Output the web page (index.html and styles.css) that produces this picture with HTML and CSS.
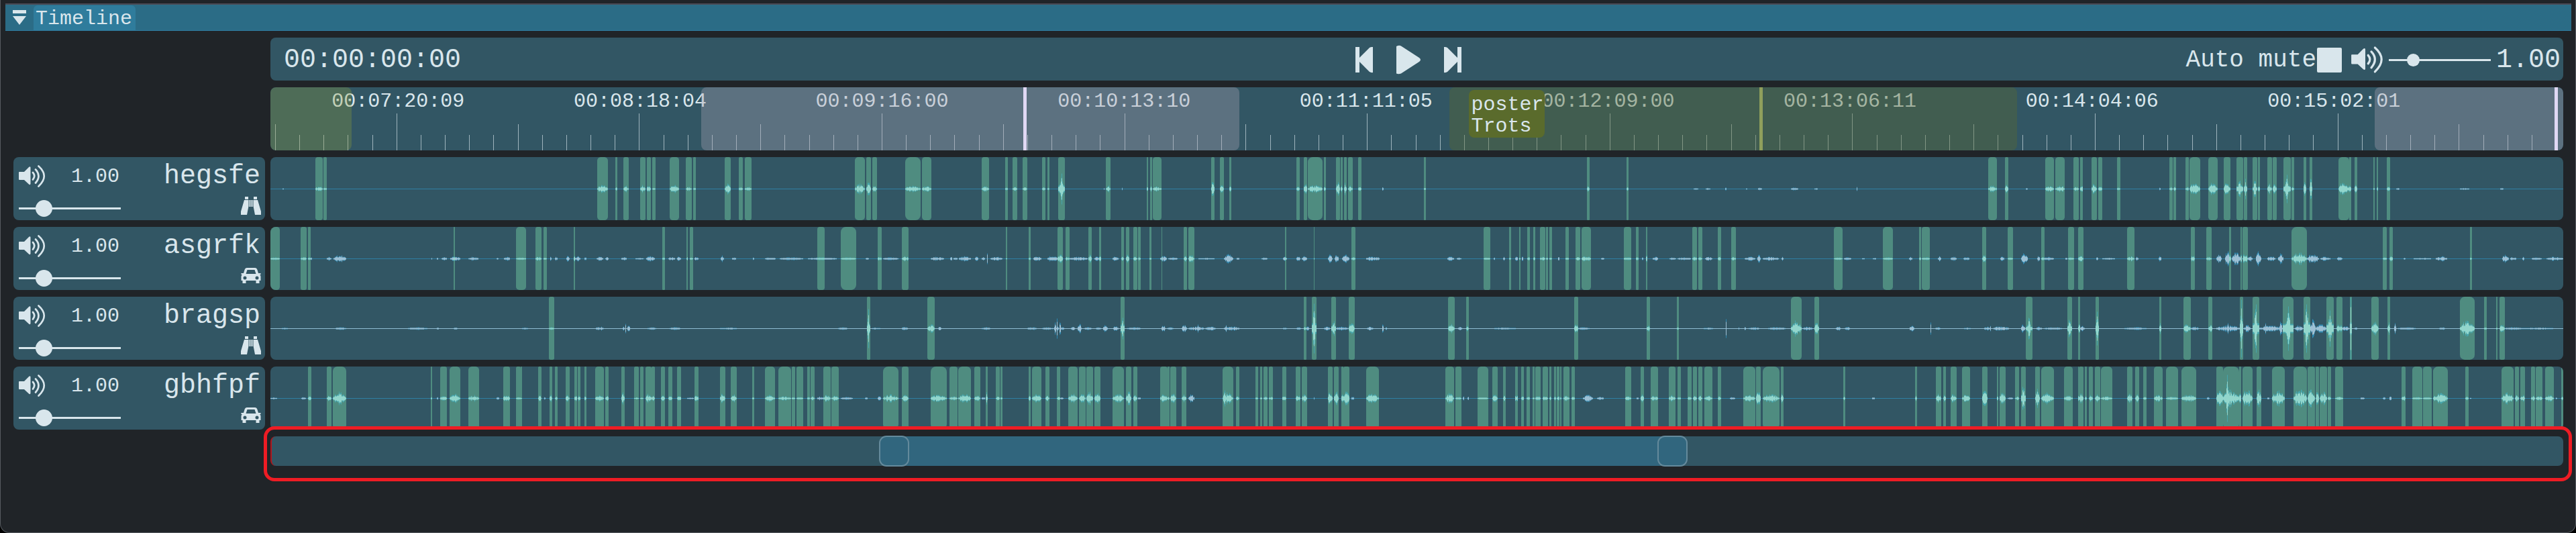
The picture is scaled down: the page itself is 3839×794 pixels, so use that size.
FILE: index.html
```
<!DOCTYPE html>
<html lang="en">
<head>
<meta charset="utf-8">
<title>Timeline</title>
<link rel="stylesheet" href="styles.css">
</head>
<body>
<svg class="defs" aria-hidden="true">
  <symbol id="speaker" viewBox="0 0 40 36">
    <path d="M0 11.500Q0 11 1 11H8L15 4Q17 2.500 17.500 4.500V29Q17 31 15 29.500L8 23H1Q0 23 0 22Z" fill="currentColor"/>
    <path d="M21 12Q25.500 17 21 22.500M25 7.500Q34 17 25 27.500M29.500 2.500Q46 17 29.500 32.500" fill="none" stroke="currentColor" stroke-width="2.700" stroke-linecap="round"/>
  </symbol>
  <symbol id="binoculars" viewBox="0 0 30 28">
    <path d="M6 0H11V4H6ZM19 0H24V4H19ZM5 5H11.500V14L9 27H0V22ZM18.500 5H25L30 22V27H21L18.500 14ZM12.500 5H14.500V15H12.500ZM15.500 5H17.500V15H15.500Z" fill="currentColor"/>
  </symbol>
  <symbol id="car" viewBox="0 0 30 24">
    <path fill-rule="evenodd" d="M9 0H21Q23.500 0 24.500 3L26 8H29.500V10H28Q29.500 11 29.500 13V19H27.500V23H22.500V19H7.500V23H2.500V19H.500V13Q.500 11 2 10H.500V8H4L5.500 3Q6.500 0 9 0ZM9.500 3L7.500 9H22.500L20.500 3ZM6 12.500A2.500 2.500 0 1 0 6 17.500A2.500 2.500 0 1 0 6 12.500ZM24 12.500A2.500 2.500 0 1 0 24 17.500A2.500 2.500 0 1 0 24 12.500Z" fill="currentColor"/>
  </symbol>
</svg>
<main class="window">
  <header class="titlebar">
    <button class="collapse" type="button" aria-label="Collapse panel">
      <svg viewBox="0 0 20 22" width="20" height="22"><path d="M0 0H20V5H0ZM0 9H20L10 22Z" fill="currentColor"/></svg>
    </button>
    <h1 class="tab">Timeline</h1>
  </header>
  <div class="body">
    <section class="transport">
      <time class="timecode">00:00:00:00</time>
      <div class="playback">
        <button type="button" aria-label="Previous"><svg viewBox="0 0 28 40" width="28" height="40"><path d="M1 1H7V17L22 2Q24 .500 27 1V39Q24 39.500 22 38L7 23V39H1Z" fill="currentColor"/></svg></button>
        <button type="button" aria-label="Play"><svg viewBox="0 0 38 44" width="38" height="44"><path d="M1 2Q5 0 8 1.500L35 19Q39 22 35 25L8 42.500Q4 44 1 42.500Z" fill="currentColor"/></svg></button>
        <button type="button" aria-label="Next"><svg viewBox="0 0 28 40" width="28" height="40"><path d="M27 1H21V17L6 2Q4 .500 1 1V39Q4 39.500 6 38L21 23V39H27Z" fill="currentColor"/></svg></button>
      </div>
      <div class="master">
        <label class="mute-label" for="mute">Auto mute</label>
        <input class="mute" id="mute" type="checkbox">
        <svg class="speaker-large"><use href="#speaker"/></svg>
        <input class="slider slider-small" type="range" min="0" max="5" step="0.01" value="1" aria-label="Master volume">
        <output class="timecode">1.00</output>
      </div>
    </section>

    <section class="ruler">
      <svg class="ticks" id="ticks" viewBox="0 0 3417 94" preserveAspectRatio="none"></svg>
      <div class="ruler-labels">
        <span>00:07:20:09</span><span>00:08:18:04</span><span>00:09:16:00</span><span>00:10:13:10</span><span>00:11:11:05</span><span>00:12:09:00</span><span>00:13:06:11</span><span>00:14:04:06</span><span>00:15:02:01</span>
      </div>
      <div class="region region-green"></div>
      <div class="region region-violet"></div>
      <div class="region region-poster"></div>
      <div class="region region-last"></div>
      <div class="marker marker-first"></div>
      <div class="marker marker-olive"></div>
      <div class="marker marker-last"></div>
      <div class="tag">poster<br>Trots</div>
    </section>

    <section class="track">
      <div class="controls"><svg class="speaker"><use href="#speaker"/></svg><output>1.00</output></div>
      <label class="name" for="volume-1">hegsfe</label>
      <input class="slider" id="volume-1" type="range" min="0" max="5" step="0.01" value="1">
      <svg class="badge binoculars"><use href="#binoculars"/></svg>
    </section>
    <svg class="lane" viewBox="0 0 3417 94" preserveAspectRatio="none"></svg>

    <section class="track">
      <div class="controls"><svg class="speaker"><use href="#speaker"/></svg><output>1.00</output></div>
      <label class="name" for="volume-2">asgrfk</label>
      <input class="slider" id="volume-2" type="range" min="0" max="5" step="0.01" value="1">
      <svg class="badge car"><use href="#car"/></svg>
    </section>
    <svg class="lane" viewBox="0 0 3417 94" preserveAspectRatio="none"></svg>

    <section class="track">
      <div class="controls"><svg class="speaker"><use href="#speaker"/></svg><output>1.00</output></div>
      <label class="name" for="volume-3">bragsp</label>
      <input class="slider" id="volume-3" type="range" min="0" max="5" step="0.01" value="1">
      <svg class="badge binoculars"><use href="#binoculars"/></svg>
    </section>
    <svg class="lane" viewBox="0 0 3417 94" preserveAspectRatio="none"></svg>

    <section class="track">
      <div class="controls"><svg class="speaker"><use href="#speaker"/></svg><output>1.00</output></div>
      <label class="name" for="volume-4">gbhfpf</label>
      <input class="slider" id="volume-4" type="range" min="0" max="5" step="0.01" value="1">
      <svg class="badge car"><use href="#car"/></svg>
    </section>
    <svg class="lane" viewBox="0 0 3417 94" preserveAspectRatio="none"></svg>

    <div class="scroller">
      <div class="scroll-range">
        <button class="handle handle-start" type="button" aria-label="Range start"></button>
        <button class="handle handle-end" type="button" aria-label="Range end"></button>
      </div>
      <div class="highlight"></div>
    </div>
  </div>
</main>
<script src="timeline.js"></script>
</body>
</html>
```

FILE: styles.css
```
:root {
  --bg: #202428;
  --panel: #325664;
  --ink: #d9e6ec;
}

* { box-sizing: border-box; }

html { background: #000; }

body {
  margin: 0;
  color: var(--ink);
  font: 30px/34px "Liberation Mono", monospace;
}

.defs { position: absolute; width: 0; height: 0; }

button {
  display: block;
  margin: 0;
  padding: 0;
  border: 0;
  background: none;
  color: inherit;
}

svg { display: block; }

.window {
  min-height: 100vh;
  padding-top: 5px;
  background: var(--bg);
  border: solid #565b60;
  border-width: 0 1px 1px;
  border-radius: 0 0 14px 14px;
}

.titlebar {
  display: flex;
  align-items: center;
  height: 41px;
  margin: 0 6px 0 7px;
  padding-left: 11px;
  gap: 11px;
  background: #2b6c86;
  border-top: 2px solid #4b4a55;
  border-bottom: 1px solid #2f7ca0;
}

.tab {
  align-self: stretch;
  margin: 1px 0 0;
  padding: 3px 5px 0 3px;
  border-radius: 6px 6px 0 0;
  background: #2f7c9c;
  font: inherit;
}

.body {
  display: grid;
  grid-template-columns: 375px 1fr;
  gap: 10px 8px;
  padding: 10px 18px 0 19px;
}

.transport {
  grid-column: 2;
  display: grid;
  grid-template-columns: 1fr auto 1fr;
  align-items: center;
  height: 64px;
  padding: 2px 4px 0 20px;
  border-radius: 8px;
  background: var(--panel);
}

.timecode { padding-top: 2px; font-size: 40px; line-height: 44px; }

.playback {
  display: flex;
  align-items: center;
  gap: 33px;
  padding-right: 42px;
}

.master {
  display: flex;
  align-items: center;
  justify-content: flex-end;
  gap: 8px;
}

.mute-label { margin-right: -7px; padding-top: 2px; font-size: 36px; }

.mute {
  appearance: none;
  width: 37px;
  height: 37px;
  margin: 0 6px 0 0;
  border-radius: 2px;
  background: var(--ink);
}

.slider {
  --thumb: 25px;
  appearance: none;
  width: 152px;
  height: 25px;
  margin: 0;
  background: none;
}

.slider-small { --thumb: 19px; }

.slider::-webkit-slider-runnable-track { height: 3px; background: var(--ink); }

.slider::-webkit-slider-thumb {
  appearance: none;
  width: var(--thumb);
  height: var(--thumb);
  margin-top: calc((3px - var(--thumb)) / 2);
  border-radius: 50%;
  background: var(--ink);
}

.speaker { width: 40px; height: 36px; }
.speaker-large { width: 48px; height: 43px; }

.ruler {
  grid-column: 2;
  position: relative;
  height: 94px;
  border-radius: 8px;
  background: var(--panel);
  overflow: hidden;
}

.ticks { position: absolute; inset: 0; width: 100%; height: 100%; }

.ruler-labels {
  position: relative;
  display: flex;
  padding: 4px 0 0 10px;
}

.ruler-labels span { flex: 0 0 10.585%; text-align: center; }

.region { position: absolute; top: 0; bottom: 0; border-radius: 8px; }
.region-green { left: 0; width: 3.54%; background: rgba(147, 159, 60, 0.3); }
.region-violet { left: 18.79%; width: 23.46%; background: rgba(173, 162, 180, 0.35); }
.region-poster { left: 51.43%; width: 24.76%; background: rgba(88, 104, 50, 0.4); }
.region-last { left: 91.79%; right: 0; background: rgba(173, 162, 180, 0.35); }

.marker { position: absolute; top: 0; bottom: 0; width: 5px; background: #e0d8f4; }
.marker-first { left: 32.84%; }
.marker-olive { left: 64.94%; background: #8f9f5c; }
.marker-last { right: 8px; }

.tag {
  position: absolute;
  top: 4px;
  left: 52.28%;
  padding: 6px 2px 1px 3px;
  border-radius: 8px;
  background: #5a6b2c;
  line-height: 32px;
}

.track {
  display: grid;
  grid-template: 58px 36px / 152px 1fr;
  align-items: center;
  padding: 0 5px 0 8px;
  border-radius: 8px;
  background: var(--panel);
}

.controls { display: flex; align-items: center; justify-content: space-between; padding-right: 2px; }

.name { padding-right: 2px; font-size: 40px; line-height: 44px; text-align: right; }

.badge { justify-self: end; align-self: start; width: 30px; margin: 1px 1px 0 0; }
.binoculars { height: 28px; }
.car { height: 24px; margin-top: 3px; }

.lane {
  width: 100%;
  height: 94px;
  border-radius: 8px;
  background: var(--panel);
}

.tick { fill: var(--ink); opacity: 0.65; }
.clip { fill: #4f8c80; }
.axis { fill: #2f7fa3; }
.axis-noisy { fill: #8fbdd2; }
.wave-outer { fill: #2f88b0; }
.wave-inner { fill: #9dc0d4; }
.clip-wave-outer { fill: #46a5ab; }
.clip-wave-inner { fill: #92d6cc; }

.scroller {
  grid-column: 2;
  position: relative;
  height: 44px;
  border-radius: 8px;
  border-left: 2px solid #b3141b;
  background: var(--panel);
}

.scroll-range {
  position: relative;
  width: 33.92%;
  height: 44px;
  margin-left: 27.15%;
  background: #31667e;
}

.handle {
  position: absolute;
  top: -1px;
  width: 45px;
  height: 46px;
  border: 2px solid #648a9c;
  border-radius: 11px;
  background: #31667e;
}

.handle-start { left: -22px; }
.handle-end { right: -24px; }

.highlight {
  position: absolute;
  inset: -15px -13px -23px -12px;
  border: 5px solid #ee1c24;
  border-radius: 16px;
  pointer-events: none;
}
```

FILE: timeline.js
```
const SVG = "http://www.w3.org/2000/svg";
const LANE_HEIGHT = 94;
const MIDDLE = LANE_HEIGHT / 2;

// Blocks of a lane: offset from the lane's start and units per lane pixel.
const BLOCKS = [[-3, 2.45], [297, 2.45], [897, 2.45], [1497, 2.45], [2097, 2.45], [2697, 2.122]];

// "start-end:peak" is a clip with its audio peak; a leading "~" is audio outside a clip.
const LANES = [
  [
    "171-198:4 200-212:2 ~52-56:1",
    "466-504:6 531-539:4 562-580:5 622-641:6 647-662:7 666-678:2 730-764:6 789-810:3 815-826:2 931-954:8 982-997:4 1004-1030:3 1406-1443:8 1448-1464:11",
    "0-16:5 120-176:5 181-215:5 400-427:5 486-494:3 513-528:3 548-566:3 621-632:5 640-646:2 679-702:24 853-870:5 1002-1006:6 1014-1022:5 1024-1056:4 1238-1250:12 1269-1285:6 1303-1311:6 ~845-848:2 ~911-915:2",
    "79-91:4 106-118:8 120-173:6 180-186:5 224-237:11 241-247:5 253-262:10 268-284:5 303-317:5 ~392-397:3 545-551:2 1139-1148:4 1284-1291:3",
    "~60-75:1 ~103-120:1 ~175-180:3 ~250-256:1 ~293-308:2 ~415-440:2 ~500-512:1 ~653-657:3 1134-1166:7 1196-1208:7 ~1271-1278:1 1343-1374:5 1380-1413:6 1446-1464:3",
    "0-8:8 36-54:8 57-69:4 117-128:2 ~250-254:3 282-292:3 295-304:3 334-343:4 346-380:10 406-435:10 454-475:11 494-515:18 517-528:22 546-560:17 562-568:5 591-606:8 610-622:8 643-666:22 668-676:4 707-716:11 725-735:24 816-850:10 851-858:8 868-876:9 927-931:2 938-943:4 970-980:4 ~1000-1010:1 ~1200-1230:1 ~1328-1338:1"
  ],
  [
    "7-42:2 118-140:3 145-154:2 ~154-159:2 ~213-230:3 ~238-284:6 ~595-598:2 ~616-620:2 ~632-652:3 675-681:4 ~664-700:4",
    "~-4-33:3 ~99-106:1 ~125-148:4 169-205:2 240-262:4 270-281:2 ~294-300:4 ~311-320:3 ~353-364:4 380-384:6 ~385-404:4 ~420-427:3 ~464-488:3 ~495-508:3 ~553-573:3 ~604-634:1 ~645-676:4 702-714:4 ~726-750:3 ~757-771:4 791-796:3 804-817:2 ~821-836:4 ~916-928:5 ~957-972:3 ~1035-1039:2 ~1079-1116:2 ~1132-1218:2 1269-1296:2 ~1235-1340:2 1355-1411:2 ~1445-1458:2",
    "20-35:5 ~38-95:2 109-133:5 ~212-262:3 ~283-292:4 ~296-312:2 ~315-360:4 ~375-388:4 ~400-412:3 ~418-421:11 ~430-475:3 488-492:1 571-578:3 ~587-618:5 ~640-676:5 677-697:7 706-720:4 ~720-787:3 788-801:7 ~812-836:4 829-836:5 ~877-900:4 908-918:4 926-938:6 954-968:4 970-981:3 1013-1018:2 1055-1058:2 ~1052-1076:5 ~1080-1115:2 1138-1150:5 1154-1177:6 ~1190-1250:1 ~1284-1318:7 ~1330-1340:3 ~1420-1442:2",
    "37-42:3 ~29-43:4 ~79-93:4 ~98-118:4 141-145:2 ~194-210:7 ~218-232:7 ~245-272:6 280-294:4 ~333-381:4 ~630-655:5 ~663-680:2 762-786:2 ~799-804:4 ~833-841:3 854-862:2 ~878-888:4 891-896:3 ~901-906:5 921-931:4 943-951:3 968-988:3 990-997:2 1002-1013:3 ~1035-1040:4 1060-1074:3 1097-1115:3 1120-1153:5 ~1190-1202:1 1275-1301:3 1318-1329:3 ~1340-1345:5 1354-1360:6 ~1379-1398:4 ~1440-1465:2",
    "~0-50:2 54-71:4 76-91:3 ~100-128:3 148-160:3 197-213:3 ~245-283:3 ~291-304:7 ~311-371:3 ~380-388:4 572-603:2 ~607-635:2 ~674-684:1 ~714-726:1 749-786:2 ~845-858:3 881-889:3 893-922:3 ~950-962:4 ~998-1020:3 ~1043-1065:3 1112-1128:6 ~1178-1192:5 1205-1226:2 ~1254-1280:10 ~1312-1324:5 1328-1341:3 ~1333-1375:3 ~1415-1424:2 1427-1447:2",
    "-6-11:5 ~50-58:3 ~70-110:1 149-172:4 ~177-184:4 ~248-256:5 350-363:5 399-415:3 ~430-448:7 ~458-475:12 471-477:8 ~480-510:10 508-512:8 513-530:9 ~530-546:5 ~557-573:12 ~592-618:4 ~625-642:8 669-717:10 ~717-756:7 ~760-792:3 ~812-830:3 957-969:2 978-989:5 ~1023-1030:2 ~1055-1110:1 ~1125-1160:4 1233-1239:2 ~1335-1355:7 ~1360-1380:3 ~1398-1405:3 ~1428-1460:2 ~1475-1527:3"
  ],
  [
    "~50-70:1 ~245-285:2 ~510-580:2 ~615-622:2 ~675-690:2",
    "288-309:2 ~190-212:1 ~460-490:3 ~558-566:4 ~568-572:7 ~576-586:5 ~650-680:2 ~730-770:2 ~915-975:1 ~1345-1380:2 1451-1463:30",
    "~0-30:1 ~108-130:3 201-228:7 ~240-252:3 ~400-430:2 ~565-600:2 ~620-662:2 ~665-671:9 ~672-682:3 ~684-688:12 ~688-700:3 ~674-677:20 ~725-740:3 ~750-765:7 ~775-800:2 ~815-835:2 ~844-860:6 ~880-900:4 907-921:28 ~930-980:2 ~1055-1070:6 ~1075-1100:2 ~1130-1150:6 ~1155-1212:3 ~1187-1194:8 ~1204-1208:6 ~1215-1255:3 ~1288-1293:8 ~1285-1340:4",
    "~30-45:1 ~78-95:2 105-115:4 ~115-126:4 134-152:38 ~180-200:3 207-223:20 ~223-268:3 269-292:10 ~335-360:3 ~393-398:14 ~404-410:3 632-656:8 ~670-684:3 698-708:4 ~800-880:1 1093-1107:8 ~1107-1150:2 1357-1369:6 1467-1474:3",
    "~95-130:1 ~176-179:18 ~222-226:4 ~245-250:5 ~260-300:2 ~330-395:2 415-454:12 ~455-495:3 500-518:10 ~577-595:5 ~610-630:3 ~848-864:6 ~924-927:12 ~940-960:2 ~1045-1070:1 ~1120-1145:3 ~1141-1145:9 ~1155-1210:4 ~1255-1270:8 1272-1296:17 ~1310-1330:4 ~1340-1405:2 1423-1440:22 1463-1471:10",
    "~0-14:4 49-60:30 ~140-210:2 250-257:18 327-351:7 ~351-375:3 406-418:8 ~430-505:5 ~465-472:11 504-515:47 ~517-540:6 546-566:38 ~584-590:17 ~566-640:5 640-675:34 ~630-638:14 ~680-705:5 707-727:44 ~728-745:14 ~745-778:7 779-802:34 810-829:8 ~830-850:4 853-859:47 ~868-876:3 922-945:10 972-980:16 ~994-999:9 ~1005-1060:2 ~1135-1155:2 1201-1247:12 1277-1286:2 1316-1320:2 1326-1343:6 ~1343-1400:2 ~1400-1495:1"
  ],
  [
    "~7-32:1 ~120-137:2 144-158:4 212-230:4 235-284:10 592-598:3 ~615-620:3 628-651:5 661-701:7",
    "-6-34:5 ~98-107:2 122-148:7 169-185:2 186-191:1 249-262:5 ~272-276:2 292-301:6 310-320:4 350-364:6 381-391:5 394-404:4 418-427:4 458-489:5 495-508:5 553-566:9 600-618:1 622-634:1 642-664:8 665-676:5 698-714:4 725-740:4 757-771:7 ~794-818:1 821-835:7 914-933:8 953-974:6 1032-1039:3 1078-1115:5 1128-1174:3 1176-1188:2 1193-1217:2 1232-1242:3 1244-1259:3 ~1270-1291:3 1291-1318:6 1321-1347:4 ~1355-1400:2 ~1443-1454:2",
    "~20-33:4 38-96:6 109-133:6 213-272:7 281-311:3 314-360:7 373-394:5 ~400-412:2 415-421:17 450-465:3 468-475:3 570-578:6 583-618:7 631-647:5 674-685:3 ~686-698:2 715-750:8 754-778:7 781-806:10 812-834:9 877-918:7 926-945:11 953-967:7 ~970-980:2 1052-1077:8 1078-1085:3 1087-1111:7 1129-1147:7 ~1155-1177:7 1280-1318:9 ~1282-1292:26 1328-1339:4 1399-1408:2 1417-1423:2 1429-1442:3 1449-1463:3",
    "28-42:5 76-93:6 97-118:6 ~141-145:2 194-211:13 215-233:14 243-250:7 251-271:14 ~280-290:3 332-380:8 622-655:8 658-680:3 ~686-691:5 ~703-707:3 741-779:2 795-813:8 832-842:5 877-887:8 898-909:4 919-930:4 942-949:3 951-971:4 978-998:4 1002-1010:3 1018-1026:3 1030-1040:5 1041-1047:3 1053-1075:5 1082-1095:4 ~1125-1162:6 ~1175-1200:3 1279-1300:4 ~1320-1328:2 1335-1347:7 1372-1400:5 1437-1463:5",
    "-1-12:3 37-51:3 56-71:5 76-91:4 98-128:5 146-160:3 ~190-210:2 240-284:6 287-305:12 311-372:7 378-388:7 604-612:4 ~710-720:2 867-875:4 943-962:7 971-980:5 997-1020:7 1039-1067:6 1112-1131:13 1166-1171:5 1175-1198:11 ~1205-1226:2 1233-1246:3 1254-1272:25 1306-1323:14 1328-1374:9 1411-1444:5 1463-1466:6",
    "-4-11:8 15-21:4 28-40:5 47-63:6 66-101:3 149-166:7 174-186:6 199-211:3 233-260:6 272-310:3 321-367:6 ~401-410:2 431-451:14 453-503:14 ~461-472:40 502-510:14 514-546:14 558-574:14 ~592-598:2 606-648:13 675-717:14 719-742:14 744-755:10 757-781:10 784-794:4 806-832:3 ~886-900:2 ~957-966:2 ~979-985:6 1017-1030:6 1050-1082:2 1084-1111:2 1116-1162:8 1217-1229:4 ~1232-1238:1 1332-1370:9 1374-1388:6 1393-1407:6 1427-1438:4 1441-1462:4 1470-1498:5 ~1505-1509:1 1521-1528:5"
  ]
];

function rect(parent, x, y, width, height, className, radius) {
  const node = document.createElementNS(SVG, "rect");
  node.setAttribute("x", x);
  node.setAttribute("y", y);
  node.setAttribute("width", width);
  node.setAttribute("height", height);
  node.setAttribute("class", className);
  if (radius) node.setAttribute("rx", radius);
  parent.append(node);
}

function column(x, height) {
  return `M${x} ${MIDDLE + 0.5 - height}h1v${height * 2}h-1z`;
}

function drawRuler(svg) {
  const step = 36.16;
  for (let i = 0; i < 95; i++) {
    const height = i % 10 === 5 ? 55 : i % 10 === 0 ? 39 : 23;
    rect(svg, Math.round(7 + i * step), LANE_HEIGHT - height, 1, height, "tick");
  }
}

function drawLane(svg, blocks, noisy) {
  const spans = [];
  blocks.forEach((text, index) => {
    const [offset, unit] = BLOCKS[index];
    for (const item of text.split(" ")) {
      const [, wave, start, end, peak] = item.match(/^(~?)(-?\d+)-(\d+):(\d+)$/);
      spans.push({
        clip: !wave,
        from: Math.round(offset + start / unit),
        to: Math.round(offset + end / unit),
        peak: Number(peak)
      });
    }
  });

  const clips = spans.filter(span => span.clip);
  for (const { from, to } of clips) {
    const width = Math.max(1, to - from);
    rect(svg, from, 0, width, LANE_HEIGHT, "clip", Math.min(8, width / 3));
  }
  rect(svg, 0, MIDDLE, 3417, 1, noisy ? "axis axis-noisy" : "axis");

  const paths = { "wave-outer": "", "wave-inner": "", "clip-wave-outer": "", "clip-wave-inner": "" };
  let seed = 7;
  const random = () => (seed = (seed * 16807) % 2147483647) / 2147483647;
  for (const { from, to, peak } of spans) {
    const width = Math.max(1, to - from);
    const sharpness = peak > 14 ? 3 : 0.6;
    for (let x = from; x < from + width; x++) {
      const envelope = Math.sin(Math.PI * (x - from + 0.5) / width) ** sharpness;
      const level = peak * Math.max(0.2, envelope * (0.4 + 0.6 * random()));
      const prefix = clips.some(clip => x >= clip.from && x < Math.max(clip.to, clip.from + 1)) ? "clip-" : "";
      const outer = Math.max(1, Math.round(level));
      paths[prefix + "wave-outer"] += column(x, outer);
      paths[prefix + "wave-inner"] += column(x, Math.max(0.5, Math.round(level * 0.7)));
    }
  }
  for (const name in paths) {
    const path = document.createElementNS(SVG, "path");
    path.setAttribute("d", paths[name]);
    path.setAttribute("class", name);
    svg.append(path);
  }
}

drawRuler(document.getElementById("ticks"));
document.querySelectorAll(".lane").forEach((svg, index) => drawLane(svg, LANES[index], index === 2));
```
